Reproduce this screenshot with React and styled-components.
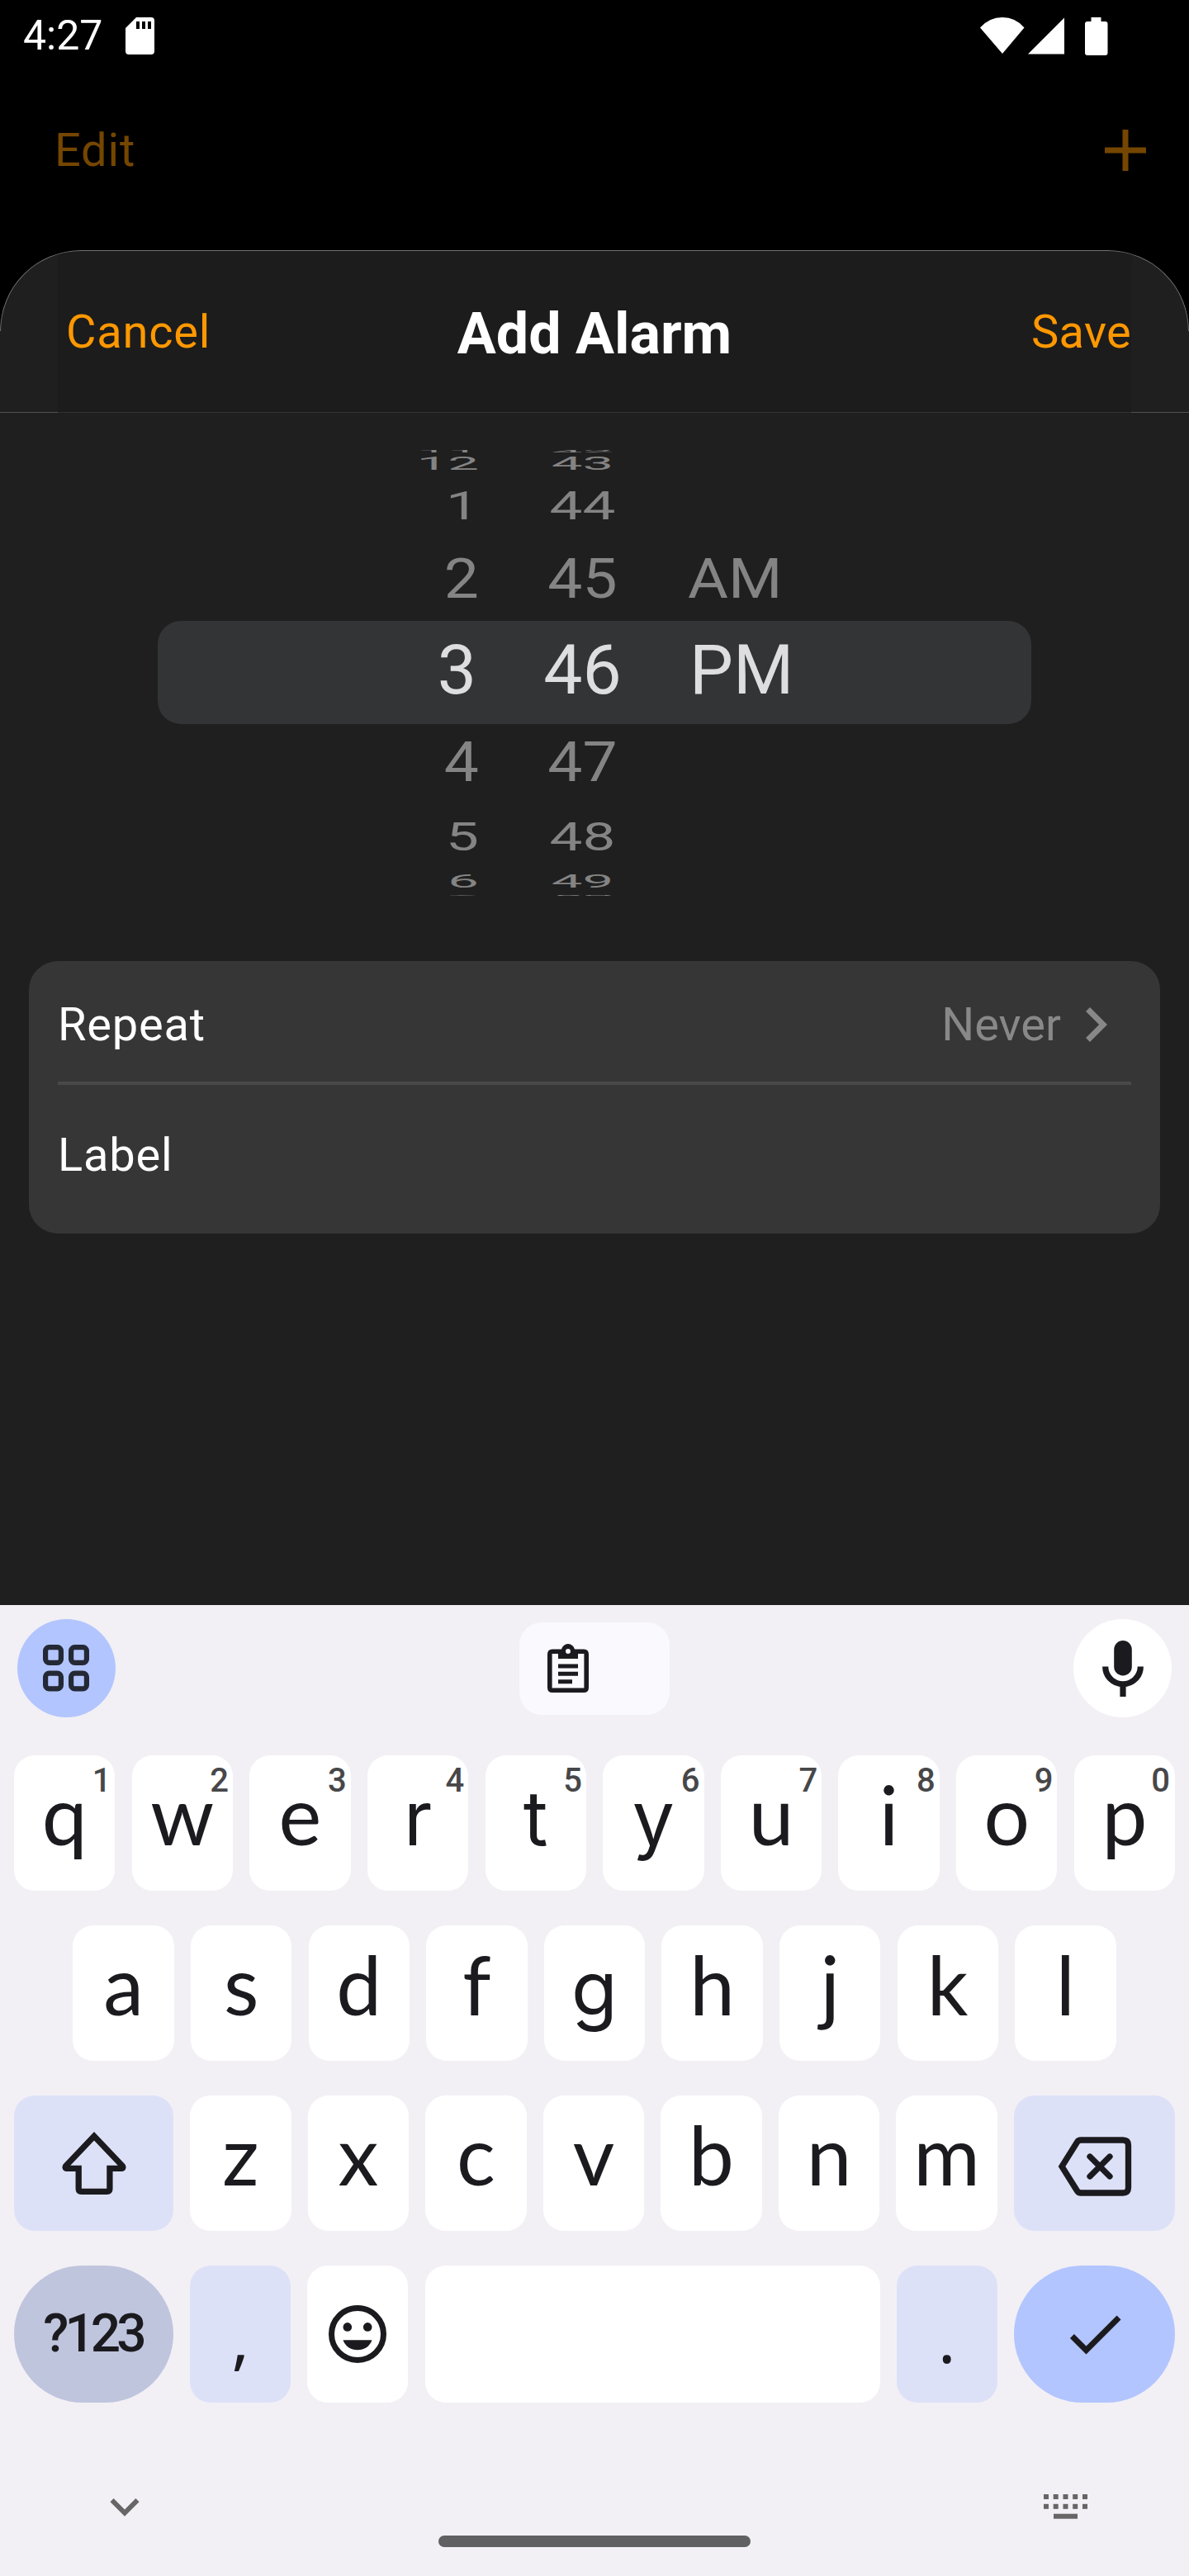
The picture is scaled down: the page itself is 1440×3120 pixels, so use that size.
import React from "react";
import styled, { createGlobalStyle } from "styled-components";

const GlobalStyle = createGlobalStyle`
  *, *::before, *::after { box-sizing: border-box; }
  html, body { margin: 0; padding: 0; background: #000; }
  body { font-family: Roboto, "Liberation Sans", sans-serif; }
  svg { display: block; flex: none; }
`;

const Screen = styled.div`
  width: 1440px;
  height: 3120px;
  display: flex;
  flex-direction: column;
  background: #000;
  overflow: hidden;
`;

const StatusBar = styled.header`
  height: 87px;
  flex: none;
  display: flex;
  justify-content: space-between;
  padding: 0 98px 0 28px;
  color: #fff;
`;

const StatusGroup = styled.div`
  display: flex;
  align-items: center;
`;

const Clock = styled.span`
  font-size: 50px;
  line-height: 87px;
  width: 124px;
`;

const AppBar = styled.nav`
  height: 216px;
  flex: none;
  display: flex;
  align-items: center;
  justify-content: space-between;
  padding: 0 52px 26px 66px;
  color: #754600;
`;

const TextButton = styled.button`
  border: 0;
  padding: 0;
  background: none;
  font-family: inherit;
  font-size: 56px;
  line-height: 66px;
  letter-spacing: ${(p) => (p.$tight ? 0.3 : 0.8)}px;
  color: ${(p) => p.$color || "inherit"};
`;

const Sheet = styled.section`
  position: relative;
  height: 1641px;
  flex: none;
  display: flex;
  flex-direction: column;
  padding-top: 1px;
  background: #1f1f1f;
  border-radius: 98px 98px 0 0;
  overflow: hidden;

  &::before {
    content: "";
    position: absolute;
    inset: 0 0 auto;
    height: 98px;
    border: 1px solid #727272;
    border-bottom: 0;
    border-radius: 98px 98px 0 0;
  }
`;

const SheetHeaderWrap = styled.div`
  height: 196px;
  flex: none;
  padding: 0 70px;
  border-bottom: 1px solid #505050;
`;

const SheetHeader = styled.div`
  height: 196px;
  display: grid;
  grid-template-columns: 1fr auto 1fr;
  align-items: center;
  padding: 0 0 0 10px;
  background: #1c1c1c;
  border-bottom: 1px solid #333333;
`;

const HeaderSide = styled.div`
  display: flex;
  justify-content: ${(p) => (p.$end ? "flex-end" : "flex-start")};
`;

const Title = styled.h1`
  margin: 4px 0 0 -10px;
  font-size: 70px;
  line-height: 82px;
  font-weight: 700;
  color: #fff;
`;

const Picker = styled.div`
  height: 664px;
  flex: none;
  padding-top: 45px;
  position: relative;
`;

const PickerHighlight = styled.div`
  position: absolute;
  left: 191px;
  right: 191px;
  top: 252px;
  height: 125px;
  border-radius: 28px;
  background: #333436;
`;

const PickerRow = styled.div`
  position: relative;
  display: grid;
  grid-template-columns: 580px 251px 1fr;
  height: ${(p) => p.$height}px;
  font-size: ${(p) => p.$size}px;
  line-height: ${(p) => p.$height}px;
  color: ${(p) => (p.$active ? "#dedee0" : "#848484")};
  white-space: nowrap;
`;

const PickerCell = styled.span`
  text-align: ${(p) => p.$align};
  padding-left: ${(p) => (p.$align === "left" ? p.$inset : 0)}px;
  padding-right: ${(p) => (p.$align === "right" ? p.$inset : 0)}px;
  transform: scaleY(${(p) => p.$squash});
`;

const Card = styled.div`
  height: 330px;
  margin: 0 35px;
  flex: none;
  padding: 0 35px;
  border-radius: 35px;
  background: #363636;
  color: #fff;
`;

const CardRow = styled.div`
  display: flex;
  align-items: center;
  justify-content: space-between;
  height: ${(p) => p.$height}px;
  padding: ${(p) => p.$padding};
  border-bottom: ${(p) => (p.$divided ? "4px solid #494949" : "0")};
  font-size: 56px;
  line-height: 66px;
  letter-spacing: 0.8px;
`;

const CardValue = styled.span`
  display: flex;
  align-items: center;
  letter-spacing: 0;
  color: #888;
`;

const Keyboard = styled.section`
  height: 1176px;
  flex: none;
  display: flex;
  flex-direction: column;
  padding-top: 17px;
  background: #f2f0f5;
  color: #1b1b1f;
`;

const KeyboardTools = styled.div`
  height: 119px;
  margin-bottom: 46px;
  display: flex;
  align-items: center;
  justify-content: space-between;
  padding: 0 21px;
`;

const RoundButton = styled.div`
  width: 119px;
  height: 119px;
  border-radius: 50%;
  display: flex;
  align-items: center;
  justify-content: center;
  background: ${(p) => p.$color};
`;

const ClipChip = styled.div`
  width: 182px;
  height: 112px;
  border-radius: 27px;
  display: flex;
  align-items: center;
  padding-left: 34px;
  background: #faf9fe;
`;

const Keys = styled.div`
  display: flex;
  flex-direction: column;
  gap: 42px;
`;

const KeyRow = styled.div`
  display: flex;
  gap: 20.2px;
  height: ${(p) => p.$height || 164}px;
  padding: 0 ${(p) => p.$inset || 17}px;
`;

const keyTones = { plain: "#ffffff", soft: "#dde1f8", deep: "#c0c5de", accent: "#b2c5ff" };

const Key = styled.div`
  position: relative;
  flex: ${(p) => (p.$width ? `0 0 ${p.$width}px` : "1 1 0")};
  display: flex;
  align-items: center;
  justify-content: center;
  padding-top: ${(p) => p.$drop || 0}px;
  border-radius: ${(p) => (p.$round ? 83 : 25)}px;
  background: ${(p) => keyTones[p.$tone || "plain"]};
`;

const Letter = styled.span`
  font-family: ${(p) => (p.$plain ? "Inter" : "Lato")}, Roboto, sans-serif;
  font-size: ${(p) => (p.$plain ? 91 : 98)}px;
  line-height: 118px;
  padding-bottom: ${(p) => (p.$plain ? 12 : 22)}px;
`;

const Hint = styled.span`
  position: absolute;
  right: ${(p) => p.$right}px;
  top: 7px;
  font-size: 40px;
  line-height: 47px;
  font-weight: 500;
  color: #474749;
`;

const Punctuation = styled.span`
  font-family: "Noto Sans", sans-serif;
  font-size: 80px;
  line-height: 100px;
  padding-top: 8px;
`;

const ModeLabel = styled.span`
  font-size: 64px;
  line-height: 76px;
  font-weight: 500;
  letter-spacing: -4.9px;
  padding-right: 2px;
`;

const NavTools = styled.div`
  height: 161px;
  padding: 91px 123px 0 116px;
  display: flex;
  align-items: center;
  justify-content: space-between;
  color: #666;
`;

const HomeHandle = styled.div`
  width: 378px;
  height: 14px;
  margin: 0 auto;
  border-radius: 7px;
  background: #606062;
`;

const SdCardIcon = () => (
  <svg width="35" height="45" viewBox="0 0 35 45" fill="currentColor">
    <path fillRule="evenodd" d="M13 0H31Q35 0 35 4V41Q35 45 31 45H4Q0 45 0 41V13ZM13 5V14H17V5ZM20 5V14H24V5ZM27 5V14H31V5Z" />
  </svg>
);

const StatusIcons = () => (
  <svg width="155" height="46" viewBox="0 0 155 46" fill="currentColor">
    <path d="M27 44 0 12.5Q11 0 27 0T53.5 12.5Z" />
    <path d="M58 44.5 102 0.5V44.5Z" />
    <path d="M134.500 0H146.500V5H151.500Q154.500 5 154.500 8V43Q154.500 46 151.500 46H130Q127 46 127 43V8Q127 5 130 5H134.500Z" />
  </svg>
);

const PlusIcon = () => (
  <svg width="50" height="50" viewBox="0 0 50 50" fill="currentColor">
    <path d="M21.500 0H28.500V21.500H50V28.500H28.500V50H21.500V28.500H0V21.500H21.500Z" />
  </svg>
);

const ChevronRight = () => (
  <svg width="84" height="84" viewBox="0 0 24 24" fill="currentColor">
    <path d="M10 6 8.590 7.410 13.170 12l-4.580 4.590L10 18l6-6z" />
  </svg>
);

const GridIcon = () => (
  <svg width="58" height="57" viewBox="0 0 58 57" fill="none" stroke="#242935" strokeWidth="6.200">
    <rect x="3.100" y="3.100" width="18.800" height="18.800" rx="4.500" />
    <rect x="34.100" y="3.100" width="18.800" height="18.800" rx="4.500" />
    <rect x="3.100" y="34.600" width="18.800" height="18.800" rx="4.500" />
    <rect x="34.100" y="34.600" width="18.800" height="18.800" rx="4.500" />
  </svg>
);

const ClipboardIcon = () => (
  <svg width="50" height="60" viewBox="0 0 50 60" fill="currentColor">
    <path fillRule="evenodd" d="M6 6.500H17A8.200 8.200 0 0 1 33 6.500H44Q50 6.500 50 12.500V53Q50 59 44 59H6Q0 59 0 53V12.500Q0 6.500 6 6.500ZM5.600 12V53.500H44.400V12H37V18H13V12ZM25 6A3 3 0 0 0 25 12A3 3 0 0 0 25 6Z" />
    <path d="M13 24.500H37V29.500H13ZM13 33.800H37V38.800H13ZM13 43.200H30V48.200H13Z" />
  </svg>
);

const MicIcon = () => (
  <svg width="50" height="68" viewBox="0 0 50 68">
    <rect x="14.200" y="0" width="21.600" height="42.500" rx="10.800" fill="currentColor" />
    <path d="M3.700 31.500A21.300 21.300 0 0 0 46.300 31.500M25 53V68" fill="none" stroke="currentColor" strokeWidth="7.200" />
  </svg>
);

const ShiftIcon = () => (
  <svg width="80" height="77" viewBox="0 0 80 77" fill="none" stroke="currentColor" strokeWidth="7.300">
    <path d="M40 5.300 6 41Q3.500 44.400 8 44.400H21.200V69Q21.200 72.300 24.500 72.300H55.500Q58.900 72.300 58.900 69V44.400H72Q76.500 44.400 74 41Z" />
  </svg>
);

const BackspaceIcon = () => (
  <svg width="90" height="72" viewBox="0 0 90 72" fill="none" stroke="currentColor" strokeWidth="7.300">
    <path d="M5 36 23.500 6.500Q25 4 28 4H79Q85.500 4 85.500 10.500V61.500Q85.500 68 79 68H28Q25 68 23.500 65.500Z" />
    <path d="M39 24 63 48M63 24 39 48" strokeLinecap="round" />
  </svg>
);

const SmileIcon = () => (
  <svg width="70" height="70" viewBox="0 0 70 70" fill="currentColor">
    <circle cx="35" cy="35" r="31.500" fill="none" stroke="currentColor" strokeWidth="7" />
    <circle cx="22.800" cy="26.400" r="5.300" />
    <circle cx="47.200" cy="26.400" r="5.300" />
    <path d="M17.500 42.300C20 50 27 54.300 35 54.300S50 50 52.500 42.300Z" />
  </svg>
);

const CheckIcon = () => (
  <svg width="84" height="84" viewBox="0 0 24 24" fill="currentColor">
    <path d="M9 16.170 4.830 12l-1.420 1.410L9 19 21 7l-1.410-1.410z" />
  </svg>
);

const ChevronDown = () => (
  <svg width="70" height="70" viewBox="0 0 24 24" fill="currentColor">
    <path d="M16.590 8.590 12 13.170 7.410 8.590 6 10l6 6 6-6z" />
  </svg>
);

const KeyboardIcon = () => (
  <svg width="53" height="30" viewBox="0 0 53 30" fill="currentColor">
    {[0, 11.8].map((y) =>
      [0, 11.7, 23.5, 35.2, 47].map((x) => <rect key={`${x}-${y}`} x={x} y={y} width="6" height="6" />)
    )}
    <rect x="12" y="23.700" width="29" height="6" />
  </svg>
);

const wheel = [
  { hour: "11", minute: "42", height: 4, size: 67, squash: 0.045 },
  { hour: "12", minute: "43", height: 24, size: 67, squash: 0.33 },
  { hour: "1", minute: "44", height: 80, size: 71, squash: 0.667 },
  { hour: "2", minute: "45", meridiem: "AM", height: 96.8, size: 75, squash: 0.895 },
  { hour: "3", minute: "46", meridiem: "PM", height: 123.6, size: 84, squash: 0.99, active: true },
  { hour: "4", minute: "47", height: 101.2, size: 75, squash: 0.895 },
  { hour: "5", minute: "48", height: 78.8, size: 71, squash: 0.667 },
  { hour: "6", minute: "49", height: 29.2, size: 67, squash: 0.33 },
  { hour: "7", minute: "50", height: 2, size: 67, squash: 0.022 },
];

const plainLetters = "ytgr";

const LetterKeys = ({ letters, hints }) =>
  [...letters].map((c, i) => (
    <Key key={c}>
      <Letter $plain={plainLetters.includes(c)}>{c}</Letter>
      {hints && <Hint $right={c === "p" ? 6 : 5}>{hints[i]}</Hint>}
    </Key>
  ));

export default function App() {
  return (
    <>
      <GlobalStyle />
      <Screen>
        <StatusBar>
          <StatusGroup>
            <Clock>4:27</Clock>
            <SdCardIcon />
          </StatusGroup>
          <StatusGroup>
            <StatusIcons />
          </StatusGroup>
        </StatusBar>
        <AppBar>
          <TextButton>Edit</TextButton>
          <PlusIcon />
        </AppBar>
        <Sheet>
          <SheetHeaderWrap>
            <SheetHeader>
              <HeaderSide>
                <TextButton $color="#ff9800">Cancel</TextButton>
              </HeaderSide>
              <Title>Add Alarm</Title>
              <HeaderSide $end>
                <TextButton $color="#ff9800" $tight>Save</TextButton>
              </HeaderSide>
            </SheetHeader>
          </SheetHeaderWrap>
          <Picker>
            <PickerHighlight />
            {wheel.map((r) => (
              <PickerRow key={r.minute} $height={r.height} $size={r.size} $active={r.active}>
                <PickerCell $align="right" $inset={r.active ? 3 : 0} $squash={r.squash}>{r.hour}</PickerCell>
                <PickerCell $align="center" $squash={r.squash}>{r.minute}</PickerCell>
                {r.meridiem && (
                  <PickerCell $align="left" $inset={r.active ? 4 : 2} $squash={r.squash}>{r.meridiem}</PickerCell>
                )}
              </PickerRow>
            ))}
          </Picker>
          <Card>
            <CardRow $height={150} $padding="8px 1px 0 0" $divided>
              <span>Repeat</span>
              <CardValue>
                Never
                <ChevronRight />
              </CardValue>
            </CardRow>
            <CardRow $height={180} $padding="0 0 11px">
              <span>Label</span>
            </CardRow>
          </Card>
        </Sheet>
        <Keyboard>
          <KeyboardTools>
            <RoundButton $color={keyTones.accent}>
              <GridIcon />
            </RoundButton>
            <ClipChip>
              <ClipboardIcon />
            </ClipChip>
            <RoundButton $color="#fff">
              <MicIcon />
            </RoundButton>
          </KeyboardTools>
          <Keys>
            <KeyRow>
              <LetterKeys letters="qwertyuiop" hints="1234567890" />
            </KeyRow>
            <KeyRow $inset={88.4}>
              <LetterKeys letters="asdfghjkl" />
            </KeyRow>
            <KeyRow>
              <Key $width={193} $tone="soft">
                <ShiftIcon />
              </Key>
              <LetterKeys letters="zxcvbnm" />
              <Key $width={195} $tone="soft" $drop={8}>
                <BackspaceIcon />
              </Key>
            </KeyRow>
            <KeyRow $height={166}>
              <Key $width={193} $tone="deep" $round>
                <ModeLabel>?123</ModeLabel>
              </Key>
              <Key $width={122} $tone="soft">
                <Punctuation>,</Punctuation>
              </Key>
              <Key $width={122}>
                <SmileIcon />
              </Key>
              <Key />
              <Key $width={122} $tone="soft">
                <Punctuation>.</Punctuation>
              </Key>
              <Key $width={195} $tone="accent" $round>
                <CheckIcon />
              </Key>
            </KeyRow>
          </Keys>
          <NavTools>
            <ChevronDown />
            <KeyboardIcon />
          </NavTools>
          <HomeHandle />
        </Keyboard>
      </Screen>
    </>
  );
}
